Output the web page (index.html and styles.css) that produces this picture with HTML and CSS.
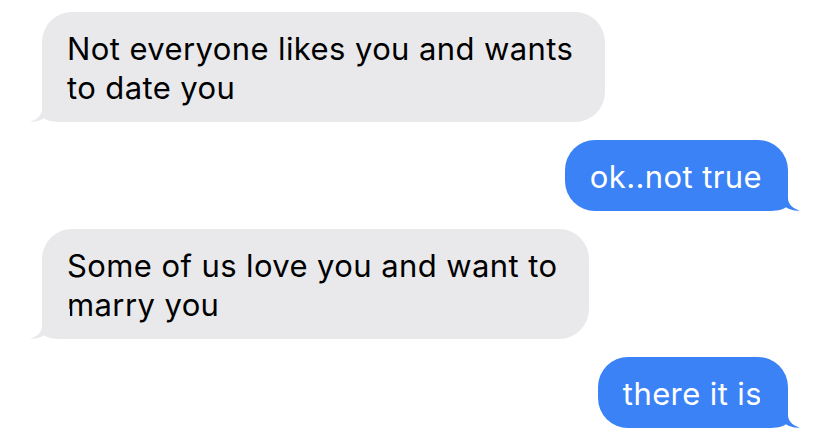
FILE: index.html
```html
<!DOCTYPE html>
<html lang="en">
<head>
<meta charset="utf-8">
<title>Messages</title>
<link rel="stylesheet" href="styles.css">
</head>
<body>
<main class="thread">
  <div class="bubble in">
    Not everyone likes you and wants<br>to date you
    <svg class="tail" viewBox="0 0 40 30" width="40" height="30" aria-hidden="true"><path d="M12 0 L12 17 C12 23 7 28 0 29.6 C5 30.2 10 28.5 14 26.2 C18 29 24 30 32 30 L40 30 L40 0 Z"/></svg>
  </div>
  <div class="bubble out">
    ok..not true
    <svg class="tail" viewBox="0 0 40 30" width="40" height="30" aria-hidden="true"><path d="M12 0 L12 17 C12 23 7 28 0 29.6 C5 30.2 10 28.5 14 26.2 C18 29 24 30 32 30 L40 30 L40 0 Z"/></svg>
  </div>
  <div class="bubble in">
    Some of us love you and want to<br>marry you
    <svg class="tail" viewBox="0 0 40 30" width="40" height="30" aria-hidden="true"><path d="M12 0 L12 17 C12 23 7 28 0 29.6 C5 30.2 10 28.5 14 26.2 C18 29 24 30 32 30 L40 30 L40 0 Z"/></svg>
  </div>
  <div class="bubble out">
    there it is
    <svg class="tail" viewBox="0 0 40 30" width="40" height="30" aria-hidden="true"><path d="M12 0 L12 17 C12 23 7 28 0 29.6 C5 30.2 10 28.5 14 26.2 C18 29 24 30 32 30 L40 30 L40 0 Z"/></svg>
  </div>
</main>
</body>
</html>
```

FILE: styles.css
```css
html, body {
  margin: 0;
  padding: 0;
  background: #ffffff;
}

.thread {
  display: flex;
  flex-direction: column;
  gap: 18px;
  padding: 12px 39px 0 42px;
  font-family: "Inter", "Roboto", "Liberation Sans", sans-serif;
  font-size: 31px;
  line-height: 39px;
  letter-spacing: 0.4px;
}

.bubble {
  position: relative;
  border-radius: 30px;
  padding: 17px 26px 15px 25px;
  white-space: nowrap;
}

.bubble .tail {
  position: absolute;
  bottom: 0;
  display: block;
}

.in {
  align-self: flex-start;
  background: #e9e9eb;
  color: #000000;
  padding-right: 32px;
}

.in .tail {
  left: -12px;
  fill: #e9e9eb;
}

.out {
  align-self: flex-end;
  background: #3a82f6;
  color: #ffffff;
}

.out .tail {
  right: -12px;
  fill: #3a82f6;
  transform: scaleX(-1);
}
```
